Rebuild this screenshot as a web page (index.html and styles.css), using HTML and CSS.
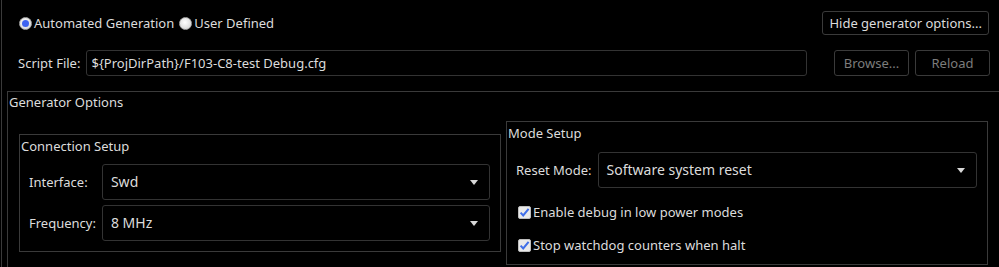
FILE: index.html
```html
<!DOCTYPE html>
<html lang="en">
<head>
  <meta charset="UTF-8" />
  <title>Debug Configuration - Generator</title>
  <link rel="stylesheet" href="styles.css">
</head>
<body>
  <div class="page">
    <div class="top-row">
      <div class="radios">
        <label class="radio checked"><span class="dot"></span>Automated Generation</label>
        <label class="radio"><span class="dot"></span>User Defined</label>
      </div>
      <button class="btn">Hide generator options...</button>
    </div>

    <div class="script-row">
      <span class="label">Script File:</span>
      <div class="text-input">${ProjDirPath}/F103-C8-test Debug.cfg</div>
      <button class="btn disabled">Browse...</button>
      <button class="btn disabled">Reload</button>
    </div>

    <div class="group gen">
      <div class="group-title">Generator Options</div>
      <div class="gen-cols">
        <div class="group conn">
          <div class="group-title">Connection Setup</div>
          <div class="form-grid">
            <span class="label">Interface:</span>
            <div class="combo">Swd<span class="arrow"></span></div>
            <span class="label">Frequency:</span>
            <div class="combo">8 MHz<span class="arrow"></span></div>
          </div>
        </div>

        <div class="group mode">
          <div class="group-title">Mode Setup</div>
          <div class="form-grid">
            <span class="label">Reset Mode:</span>
            <div class="combo">Software system reset<span class="arrow"></span></div>
          </div>
          <label class="check first">
            <svg class="box" width="13" height="13" viewBox="0 0 13 13">
              <rect x="0.5" y="0.5" width="12" height="12" rx="1.5" fill="#e9e9e9" stroke="#bdbdbd"/>
              <path d="M2.6 6.6 L5.2 9.4 L10.6 2.8" fill="none" stroke="#3f6ee8" stroke-width="2"/>
            </svg>Enable debug in low power modes
          </label>
          <label class="check">
            <svg class="box" width="13" height="13" viewBox="0 0 13 13">
              <rect x="0.5" y="0.5" width="12" height="12" rx="1.5" fill="#e9e9e9" stroke="#bdbdbd"/>
              <path d="M2.6 6.6 L5.2 9.4 L10.6 2.8" fill="none" stroke="#3f6ee8" stroke-width="2"/>
            </svg>Stop watchdog counters when halt
          </label>
        </div>
      </div>
    </div>
  </div>
</body>
</html>
```

FILE: styles.css
```css
:root {
  --bg: #000;
  --text: #dcdcdc;
  --dim: #7c7c7c;
  --frame: #3a3a3a;
  --field: #333;
}

* {
  box-sizing: border-box;
}

html, body {
  height: 100%;
}

body {
  margin: 0;
  background: var(--bg);
  color: var(--text);
  font-family: "Noto Sans", "Open Sans", sans-serif;
  font-size: 13px;
  overflow: hidden;
}

.page {
  margin-left: 1px;
  border-left: 1px solid var(--frame);
  height: 100%;
  overflow: hidden;
}

.top-row {
  display: flex;
  justify-content: space-between;
  align-items: center;
  padding: 11px 10px 0 17px;
}

.radios {
  display: flex;
  gap: 5px;
}

.radio {
  display: flex;
  align-items: center;
}

.radio .dot {
  width: 13px;
  height: 13px;
  border-radius: 50%;
  background: radial-gradient(circle at 45% 40%, #ffffff, #cfcfcf);
  border: 1px solid #a8a8a8;
  margin-right: 2px;
  position: relative;
}

.radio.checked .dot::after {
  content: "";
  position: absolute;
  left: 2px;
  top: 2px;
  width: 7px;
  height: 7px;
  border-radius: 50%;
  background: #3e63f0;
}

.btn {
  font: inherit;
  color: var(--text);
  background: var(--bg);
  border: 1px solid var(--frame);
  border-radius: 3px;
  height: 24px;
  padding: 0 6px;
}

.btn.disabled {
  color: var(--dim);
  width: 75px;
  height: 26px;
}

.script-row {
  display: flex;
  align-items: center;
  margin-top: 15px;
  padding: 0 9px 0 16px;
}

.script-row .label {
  margin-right: 6px;
}

.text-input {
  flex: 1;
  height: 26px;
  line-height: 24px;
  border: 1px solid var(--field);
  border-radius: 3px;
  padding-left: 4px;
  margin-right: 27px;
  white-space: nowrap;
}

.script-row .btn + .btn {
  margin-left: 6px;
}

.group {
  border: 1px solid var(--frame);
}

.group-title {
  padding-left: 1px;
  line-height: 18px;
}

.gen {
  margin: 15px -1px 0 5px;
  height: 190px;
}

.gen > .group-title {
  margin-top: 1px;
}

.gen-cols {
  display: grid;
  grid-template-columns: 1fr 1fr;
  align-items: center;
  gap: 5px;
  padding: 0 11px;
  margin-top: 10px;
}

.conn {
  padding-bottom: 10px;
}

.conn .group-title {
  margin-top: 2px;
}

.form-grid {
  display: grid;
  grid-template-columns: auto 1fr;
  align-items: center;
  column-gap: 6px;
  row-gap: 5px;
  padding: 0 10px 0 9px;
}

.conn .form-grid {
  margin-top: 9px;
}

.mode .form-grid {
  margin-top: 10px;
}

.combo {
  position: relative;
  height: 36px;
  line-height: 34px;
  border: 1px solid var(--field);
  border-radius: 3px;
  padding-left: 8px;
  font-size: 14px;
}

.arrow {
  position: absolute;
  right: 11px;
  top: 15px;
  border-left: 4.5px solid transparent;
  border-right: 4.5px solid transparent;
  border-top: 5px solid #d8d8d8;
}

.mode .group-title {
  margin-top: 2px;
}

.mode {
  padding-bottom: 9px;
}

.check {
  display: flex;
  align-items: center;
  padding-left: 11px;
  height: 20px;
  margin-top: 13px;
}

.check.first {
  margin-top: 14px;
}

.check .box {
  margin-right: 2px;
}
```
